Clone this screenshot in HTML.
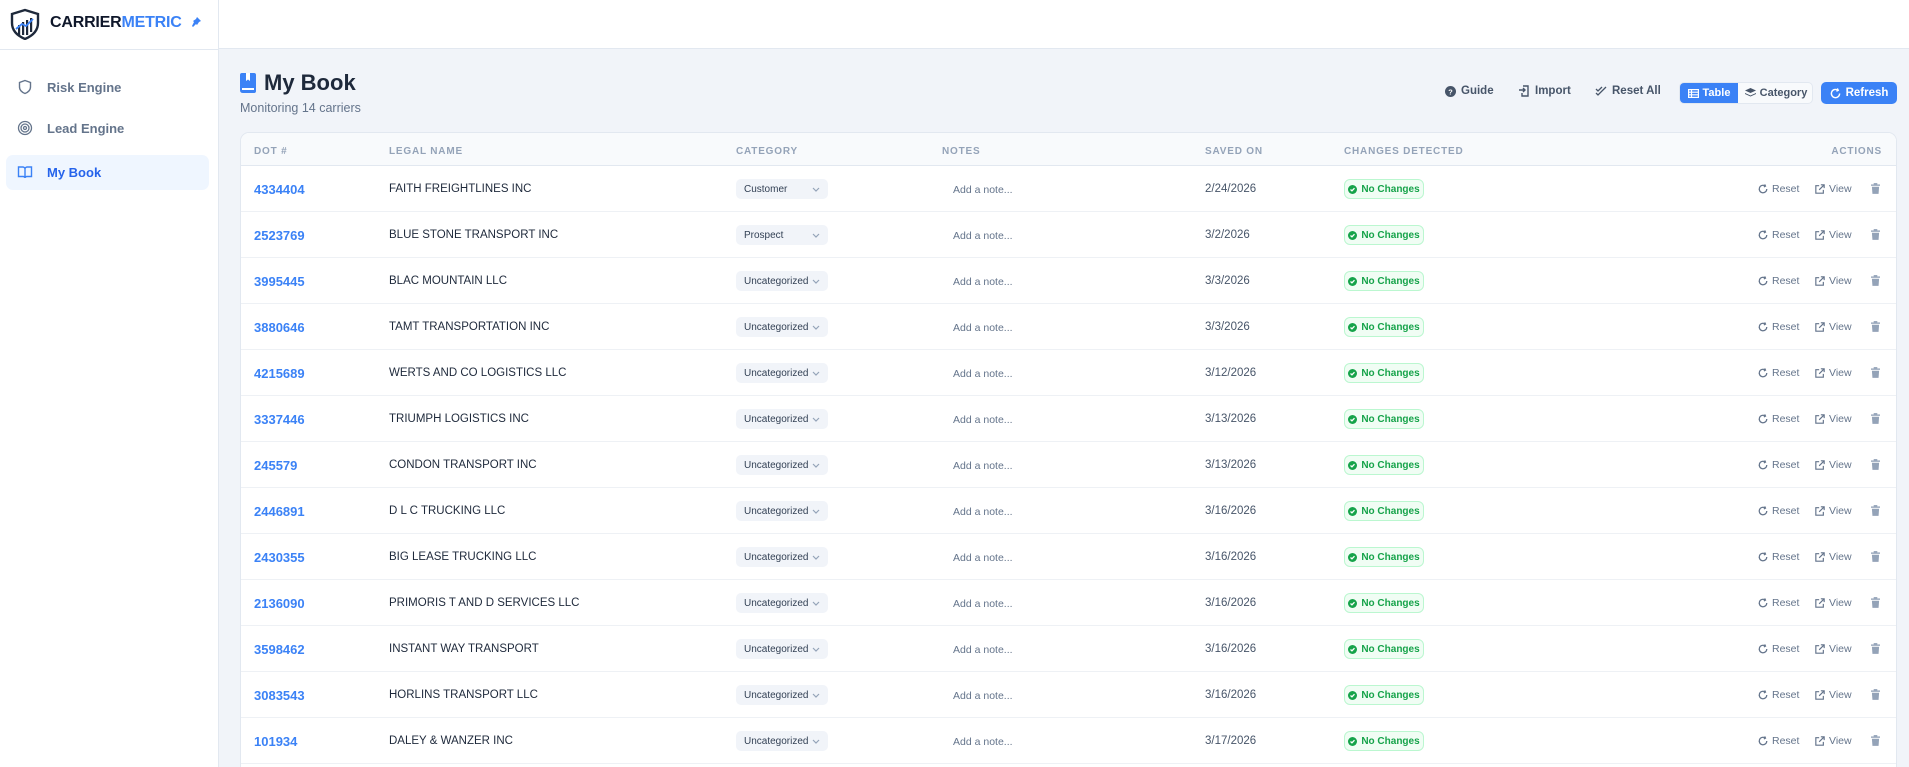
<!DOCTYPE html>
<html><head><meta charset="utf-8">
<style>
*{box-sizing:border-box;margin:0;padding:0}
html{width:1909px;height:767px;overflow:hidden}
body{width:1909px;height:767px;overflow:hidden;background:#f1f4f9;font-family:"Liberation Sans",Arial,sans-serif;color:#1e293b;position:relative}
.top{position:absolute;left:0;top:0;width:1909px;height:49px;background:#fff;border-bottom:1px solid #e2e8f0}
.side{position:absolute;left:0;top:0;width:219px;height:767px;background:#fff;border-right:1px solid #e2e8f0}
.logo{position:absolute;left:9px;top:8px}
.brand{position:absolute;left:50px;top:14px;font-size:16px;font-weight:900;letter-spacing:-0.2px;color:#0f172a}
.brand span{color:#3b82f6}
.pin{position:absolute;left:190px;top:16px}
.sep{position:absolute;left:0;top:49px;width:219px;border-top:1px solid #e2e8f0}
.nav{position:absolute;left:6px;width:203px;height:35px;border-radius:7px;font-size:13px;font-weight:bold;color:#64748b}
.nav .t{position:absolute;left:41px;top:10px}
.nav svg{position:absolute;left:11px;top:9px}
.nav.on{background:#eff6ff;color:#2563eb}
.title{position:absolute;left:264px;top:70px;font-size:22px;font-weight:bold;color:#1e293b}
.sub{position:absolute;left:240px;top:101px;font-size:12.5px;color:#64748b}
.btn{position:absolute;top:85px;font-size:11.5px;font-weight:bold;color:#475569;display:flex;align-items:center;gap:5px}
.tog{position:absolute;left:1679px;top:82px;width:134px;height:22px;border:1px solid #e2e8f0;border-radius:5px;background:#f8fafc;overflow:hidden;font-size:11px;font-weight:bold}
.tog .a{position:absolute;left:0;top:0;width:58px;height:20px;background:#3b82f6;color:#fff;display:flex;align-items:center;justify-content:center;gap:4px}
.tog .b{position:absolute;left:58px;top:0;width:76px;height:20px;color:#475569;display:flex;align-items:center;justify-content:center;gap:4px}
.ref{position:absolute;left:1821px;top:82px;width:76px;height:22px;background:#3b82f6;border-radius:5px;color:#fff;font-size:11.5px;font-weight:bold;display:flex;align-items:center;justify-content:center;gap:5px}
.card{position:absolute;left:240px;top:132px;width:1657px;height:635px;background:#fff;border:1px solid #e2e8f0;border-bottom:none;border-radius:9px 9px 0 0;overflow:hidden}
.hd{position:absolute;left:0;top:0;width:100%;height:33px;background:#f8fafc;border-bottom:1px solid #e2e8f0}
.h{position:absolute;top:13px;font-size:10px;font-weight:bold;letter-spacing:0.8px;color:#94a3b8}
.row{position:absolute;left:0;width:100%;height:46px;border-bottom:1px solid #eef1f5}
.c{position:absolute;top:17px;font-size:11.5px}
.dot{left:13px;top:16px;font-size:13px;font-weight:bold;color:#3b82f6}
.nm{left:148px;color:#1e293b}
.dd{position:absolute;left:495px;top:13px;width:92px;height:20px;background:#f1f4f9;border-radius:5px;font-size:10px;color:#334155;padding:5px 0 0 8px}
.dd svg{position:absolute;right:8px;top:8px}
.note{left:712px;font-size:10.5px;color:#64748b;top:18px}
.date{left:964px;font-size:11.5px;color:#475569}
.bd{position:absolute;left:1103px;top:13px;width:80px;height:20px;background:#f0fdf4;border:1px solid #bbf7d0;border-radius:6px;font-size:10px;font-weight:bold;color:#16a34a;display:flex;align-items:center;justify-content:center;gap:4px}
.ac{position:absolute;top:17px;font-size:10.5px;color:#64748b;display:flex;align-items:center;gap:4px}
</style></head><body>
<div class="top"></div>
<div class="side">
<svg class="logo" width="32" height="32" viewBox="0 0 32 32"><path d="M16 2 L29 6 V15 C29 23 23 28 16 31 C9 28 3 23 3 15 V6 Z" fill="#fff" stroke="#1e293b" stroke-width="2.4"/><rect x="9" y="17" width="2.2" height="10" fill="#1e293b"/><rect x="13" y="14" width="2.2" height="13" fill="#1e293b"/><rect x="17" y="12" width="2.2" height="15" fill="#1e293b"/><rect x="21" y="10" width="2.2" height="14" fill="#1e293b"/><path d="M7 21 L13 16 L17 18 L24 11" stroke="#3b82f6" stroke-width="1.8" fill="none"/></svg>
<div class="brand">CARRIER<span>METRIC</span></div>
<svg class="pin" width="12" height="12" viewBox="0 0 12 12"><path d="M7 1 L11 5 L9 6 L7 9 L6 8 L3 11 L2 10 L4 6 L3 5 L6 3 Z" fill="#3b82f6"/></svg>
<div class="sep"></div>
<div class="nav" style="top:70px"><svg width="16" height="16" viewBox="0 0 16 16" fill="none" stroke="#64748b" stroke-width="1.4"><path d="M8 1.5 L13.5 3.5 V8 C13.5 11 11 13.5 8 14.5 C5 13.5 2.5 11 2.5 8 V3.5 Z"/></svg><span class="t">Risk Engine</span></div>
<div class="nav" style="top:111px"><svg width="16" height="16" viewBox="0 0 16 16" fill="none" stroke="#64748b" stroke-width="1.3"><circle cx="8" cy="8" r="6.5"/><circle cx="8" cy="8" r="4"/><circle cx="8" cy="8" r="1.5"/></svg><span class="t">Lead Engine</span></div>
<div class="nav on" style="top:155px"><svg width="16" height="16" viewBox="0 0 16 16" fill="none" stroke="#3b82f6" stroke-width="1.4"><path d="M1.5 3 H6 C7 3 8 4 8 5 V14 C8 13 7 12.5 6 12.5 H1.5 Z M14.5 3 H10 C9 3 8 4 8 5 V14 C8 13 9 12.5 10 12.5 H14.5 Z"/></svg><span class="t">My Book</span></div>
</div>
<svg style="position:absolute;left:240px;top:73px" width="16" height="20" viewBox="0 0 16 20"><path d="M2 0 H14 Q16 0 16 2 V18 Q16 20 14 20 H3 Q0 20 0 17 V2 Q0 0 2 0 Z" fill="#3b82f6"/><path d="M6 0 V8 L8 6.5 L10 8 V0 Z" fill="#fff"/><rect x="2" y="15" width="12" height="2" fill="#fff"/></svg>
<div class="title">My Book</div>
<div class="sub">Monitoring 14 carriers</div>
<div class="btn" style="left:1445px"><svg width="11" height="11" viewBox="0 0 12 12"><circle cx="6" cy="6" r="6" fill="#475569"/><text x="6" y="9" font-size="8" text-anchor="middle" fill="#fff" font-weight="bold" font-family="Liberation Sans">?</text></svg>Guide</div>
<div class="btn" style="left:1519px"><svg width="11" height="12" viewBox="0 0 11 12" fill="none" stroke="#475569" stroke-width="1.4"><path d="M4 1 H9 V11 H3 V8"/><path d="M0 5 H6 M4 3 L6 5 L4 7"/></svg>Import</div>
<div class="btn" style="left:1595px"><svg width="12" height="10" viewBox="0 0 12 10" fill="none" stroke="#475569" stroke-width="1.3"><path d="M1 3 L3 5 L7 1 M1 7 L3 9 L11 1"/></svg>Reset All</div>
<div class="tog"><div class="a"><svg width="11" height="9" viewBox="0 0 11 9" fill="none" stroke="#fff" stroke-width="1.2"><rect x="0.6" y="0.6" width="9.8" height="7.8"/><path d="M0.6 3.2 H10.4 M0.6 5.8 H10.4 M3.5 0.6 V8.4"/></svg>Table</div><div class="b"><svg width="11" height="10" viewBox="0 0 11 10" fill="#475569"><path d="M5.5 0 L11 2.5 L5.5 5 L0 2.5 Z"/><path d="M0 5 L5.5 7.5 L11 5 V6 L5.5 8.5 L0 6 Z"/></svg>Category</div></div>
<div class="ref"><svg width="11" height="11" viewBox="0 0 12 12" fill="none" stroke="#fff" stroke-width="1.5"><path d="M10.5 6 A4.5 4.5 0 1 1 8.5 2.3"/><path d="M8 0.5 L9 2.5 L7 3.5" /></svg>Refresh</div>
<div class="card">
<div class="hd">
<div class="h" style="left:13px">DOT #</div>
<div class="h" style="left:148px">LEGAL NAME</div>
<div class="h" style="left:495px">CATEGORY</div>
<div class="h" style="left:701px">NOTES</div>
<div class="h" style="left:964px">SAVED ON</div>
<div class="h" style="left:1103px">CHANGES DETECTED</div>
<div class="h" style="right:14px">ACTIONS</div>
</div>
<div id="rows"></div>
</div>
<script>
var d=[["4334404","FAITH FREIGHTLINES INC","Customer","2/24/2026"],["2523769","BLUE STONE TRANSPORT INC","Prospect","3/2/2026"],["3995445","BLAC MOUNTAIN LLC","Uncategorized","3/3/2026"],["3880646","TAMT TRANSPORTATION INC","Uncategorized","3/3/2026"],["4215689","WERTS AND CO LOGISTICS LLC","Uncategorized","3/12/2026"],["3337446","TRIUMPH LOGISTICS INC","Uncategorized","3/13/2026"],["245579","CONDON TRANSPORT INC","Uncategorized","3/13/2026"],["2446891","D L C TRUCKING LLC","Uncategorized","3/16/2026"],["2430355","BIG LEASE TRUCKING LLC","Uncategorized","3/16/2026"],["2136090","PRIMORIS T AND D SERVICES LLC","Uncategorized","3/16/2026"],["3598462","INSTANT WAY TRANSPORT","Uncategorized","3/16/2026"],["3083543","HORLINS TRANSPORT LLC","Uncategorized","3/16/2026"],["101934","DALEY &amp; WANZER INC","Uncategorized","3/17/2026"]];
var h="";
d.forEach(function(r,i){
h+='<div class="row" style="top:'+(33+i*46)+'px">'+
'<div class="c dot">'+r[0]+'</div><div class="c nm">'+r[1]+'</div>'+
'<div class="dd">'+r[2]+'<svg width="8" height="5" viewBox="0 0 8 5" fill="none" stroke="#94a3b8" stroke-width="1.2"><path d="M1 1 L4 4 L7 1"/></svg></div>'+
'<div class="c note">Add a note...</div><div class="c date">'+r[3]+'</div>'+
'<div class="bd"><svg width="9" height="9" viewBox="0 0 10 10"><circle cx="5" cy="5" r="5" fill="#16a34a"/><path d="M2.8 5 L4.4 6.5 L7.2 3.6" stroke="#fff" stroke-width="1.4" fill="none"/></svg>No Changes</div>'+
'<div class="ac" style="left:1517px"><svg width="10" height="10" viewBox="0 0 12 12" fill="none" stroke="#64748b" stroke-width="1.5"><path d="M10.5 6 A4.5 4.5 0 1 1 8.5 2.3"/><path d="M8 0.5 L9 2.5 L7 3.5"/></svg>Reset</div>'+
'<div class="ac" style="left:1574px"><svg width="10" height="10" viewBox="0 0 12 12" fill="none" stroke="#64748b" stroke-width="1.4"><path d="M5 2 H1 V11 H10 V7 M7 1 H11 V5 M11 1 L5 7"/></svg>View</div>'+
'<div class="ac" style="left:1630px"><svg width="9" height="11" viewBox="0 0 10 12" fill="#94a3b8"><rect x="0" y="1.5" width="10" height="1.5"/><rect x="3" y="0" width="4" height="1.5"/><path d="M1 4 H9 L8.4 12 H1.6 Z"/></svg></div>'+
'</div>';});
document.getElementById("rows").innerHTML=h;
</script>
</body></html>
